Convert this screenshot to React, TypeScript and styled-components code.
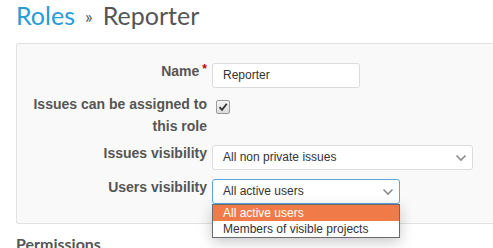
import React from "react";
import styled, { createGlobalStyle } from "styled-components";

const Global = createGlobalStyle`
  html, body { margin: 0; padding: 0; background: #fff; }
  body { font-family: "Liberation Sans", Arial, sans-serif; color: #555; overflow: hidden; }
`;

const Page = styled.div`
  padding: 1px 0 0 16px;
  width: 493px;
  height: 248px;
  box-sizing: border-box;
  overflow: hidden;
`;

const Title = styled.h2`
  margin: 0 0 14px;
  font-family: Lato, "Open Sans", sans-serif;
  font-weight: 400;
  font-size: 25px;
  line-height: 28px;
  height: 28px;
  color: #555;
`;

const Crumb = styled.a`
  color: #2a9bd6;
  text-decoration: none;
`;

const Sep = styled.span`
  font-size: 18px;
  line-height: 0;
  margin: 0 10px 0 10px;
  color: #555;
  position: relative;
  top: -2px;
`;

const Box = styled.div`
  background: #f9f9f9;
  border: 1px solid #e2e2e2;
  border-right: none;
  border-radius: 3px 0 0 3px;
  padding: 16px 0 19px;
  display: flex;
  flex-direction: column;
  gap: 5px;
`;

const Row = styled.div<{ $extra?: number }>`
  display: grid;
  grid-template-columns: 190px 1fr;
  column-gap: 5px;
  align-items: start;
  margin-top: ${(p) => p.$extra ?? 0}px;
`;

const Label = styled.label`
  text-align: right;
  font-weight: 700;
  font-size: 14px;
  line-height: 22px;
  color: #555;
`;

const Required = styled.span`
  color: #bb0000;
  font-size: 12px;
  vertical-align: top;
  margin-left: 3px;
  line-height: 18px;
`;

const Control = styled.div`
  position: relative;
  margin-top: 3px;
`;

const TextInput = styled.div`
  width: 148px;
  height: 25px;
  box-sizing: border-box;
  border: 1px solid #dcdcdc;
  border-radius: 3px;
  background: #fff;
  font-size: 12px;
  line-height: 23px;
  padding-left: 10px;
  color: #333;
`;

const Check = styled.span`
  display: block;
  width: 12px;
  height: 12px;
  margin: 4px 0 0 4px;
  border: 1px solid #9a9a9a;
  border-radius: 2px;
  background: linear-gradient(#f4f4f4, #dcdcdc);
  position: relative;
`;

const CheckMark = styled.svg`
  position: absolute;
  left: 1px;
  top: 1px;
`;

const Select = styled.div<{ $w: number; $focus?: boolean }>`
  width: ${(p) => p.$w}px;
  height: 25px;
  box-sizing: border-box;
  border: 1px solid ${(p) => (p.$focus ? "#5aa6dc" : "#dcdcdc")};
  border-radius: 3px;
  background: #fff;
  font-size: 12px;
  line-height: 23px;
  padding-left: 10px;
  color: #333;
  display: flex;
  justify-content: space-between;
  align-items: center;
`;

const Chevron = styled.svg`
  margin-right: 5px;
`;

const Menu = styled.div`
  position: absolute;
  left: 0;
  top: 25px;
  width: 188px;
  box-sizing: border-box;
  border: 1px solid #6b6b6b;
  background: #fff;
  box-shadow: 0 4px 14px rgba(0, 0, 0, 0.22);
  z-index: 5;
`;

const Option = styled.div<{ $active?: boolean }>`
  height: 16px;
  line-height: 16px;
  font-size: 12px;
  padding-left: 10px;
  background: ${(p) => (p.$active ? "#f07a48" : "#fff")};
  color: ${(p) => (p.$active ? "#fff" : "#333")};
  white-space: nowrap;
`;

const Heading = styled.h3`
  margin: 10px 0 0;
  font-family: Lato, "Open Sans", sans-serif;
  font-weight: 700;
  font-size: 16px;
  line-height: 20px;
  color: #555;
`;

const Arrow = () => (
  <Chevron width="12" height="8" viewBox="0 0 12 8">
    <path d="M1.5 1.5 L6 6 L10.5 1.5" fill="none" stroke="#8a8a8a" strokeWidth="1.6" />
  </Chevron>
);

export default function App() {
  return (
    <>
      <Global />
      <Page>
        <Title>
          <Crumb href="#">Roles</Crumb>
          <Sep>»</Sep>
          Reporter
        </Title>
        <Box>
          <Row>
            <Label>
              Name<Required>*</Required>
            </Label>
            <Control>
              <TextInput>Reporter</TextInput>
            </Control>
          </Row>
          <Row>
            <Label>
              Issues can be assigned to
              <br />
              this role
            </Label>
            <Control>
              <Check>
                <CheckMark width="10" height="10" viewBox="0 0 10 10">
                  <path d="M1.5 5.2 L4 7.8 L8.8 1.8" fill="none" stroke="#333" strokeWidth="1.8" />
                </CheckMark>
              </Check>
            </Control>
          </Row>
          <Row>
            <Label>Issues visibility</Label>
            <Control>
              <Select $w={261}>
                All non private issues
                <Arrow />
              </Select>
            </Control>
          </Row>
          <Row $extra={1}>
            <Label>Users visibility</Label>
            <Control>
              <Select $w={188} $focus>
                All active users
                <Arrow />
              </Select>
              <Menu>
                <Option $active>All active users</Option>
                <Option>Members of visible projects</Option>
              </Menu>
            </Control>
          </Row>
        </Box>
        <Heading>Permissions</Heading>
      </Page>
    </>
  );
}
